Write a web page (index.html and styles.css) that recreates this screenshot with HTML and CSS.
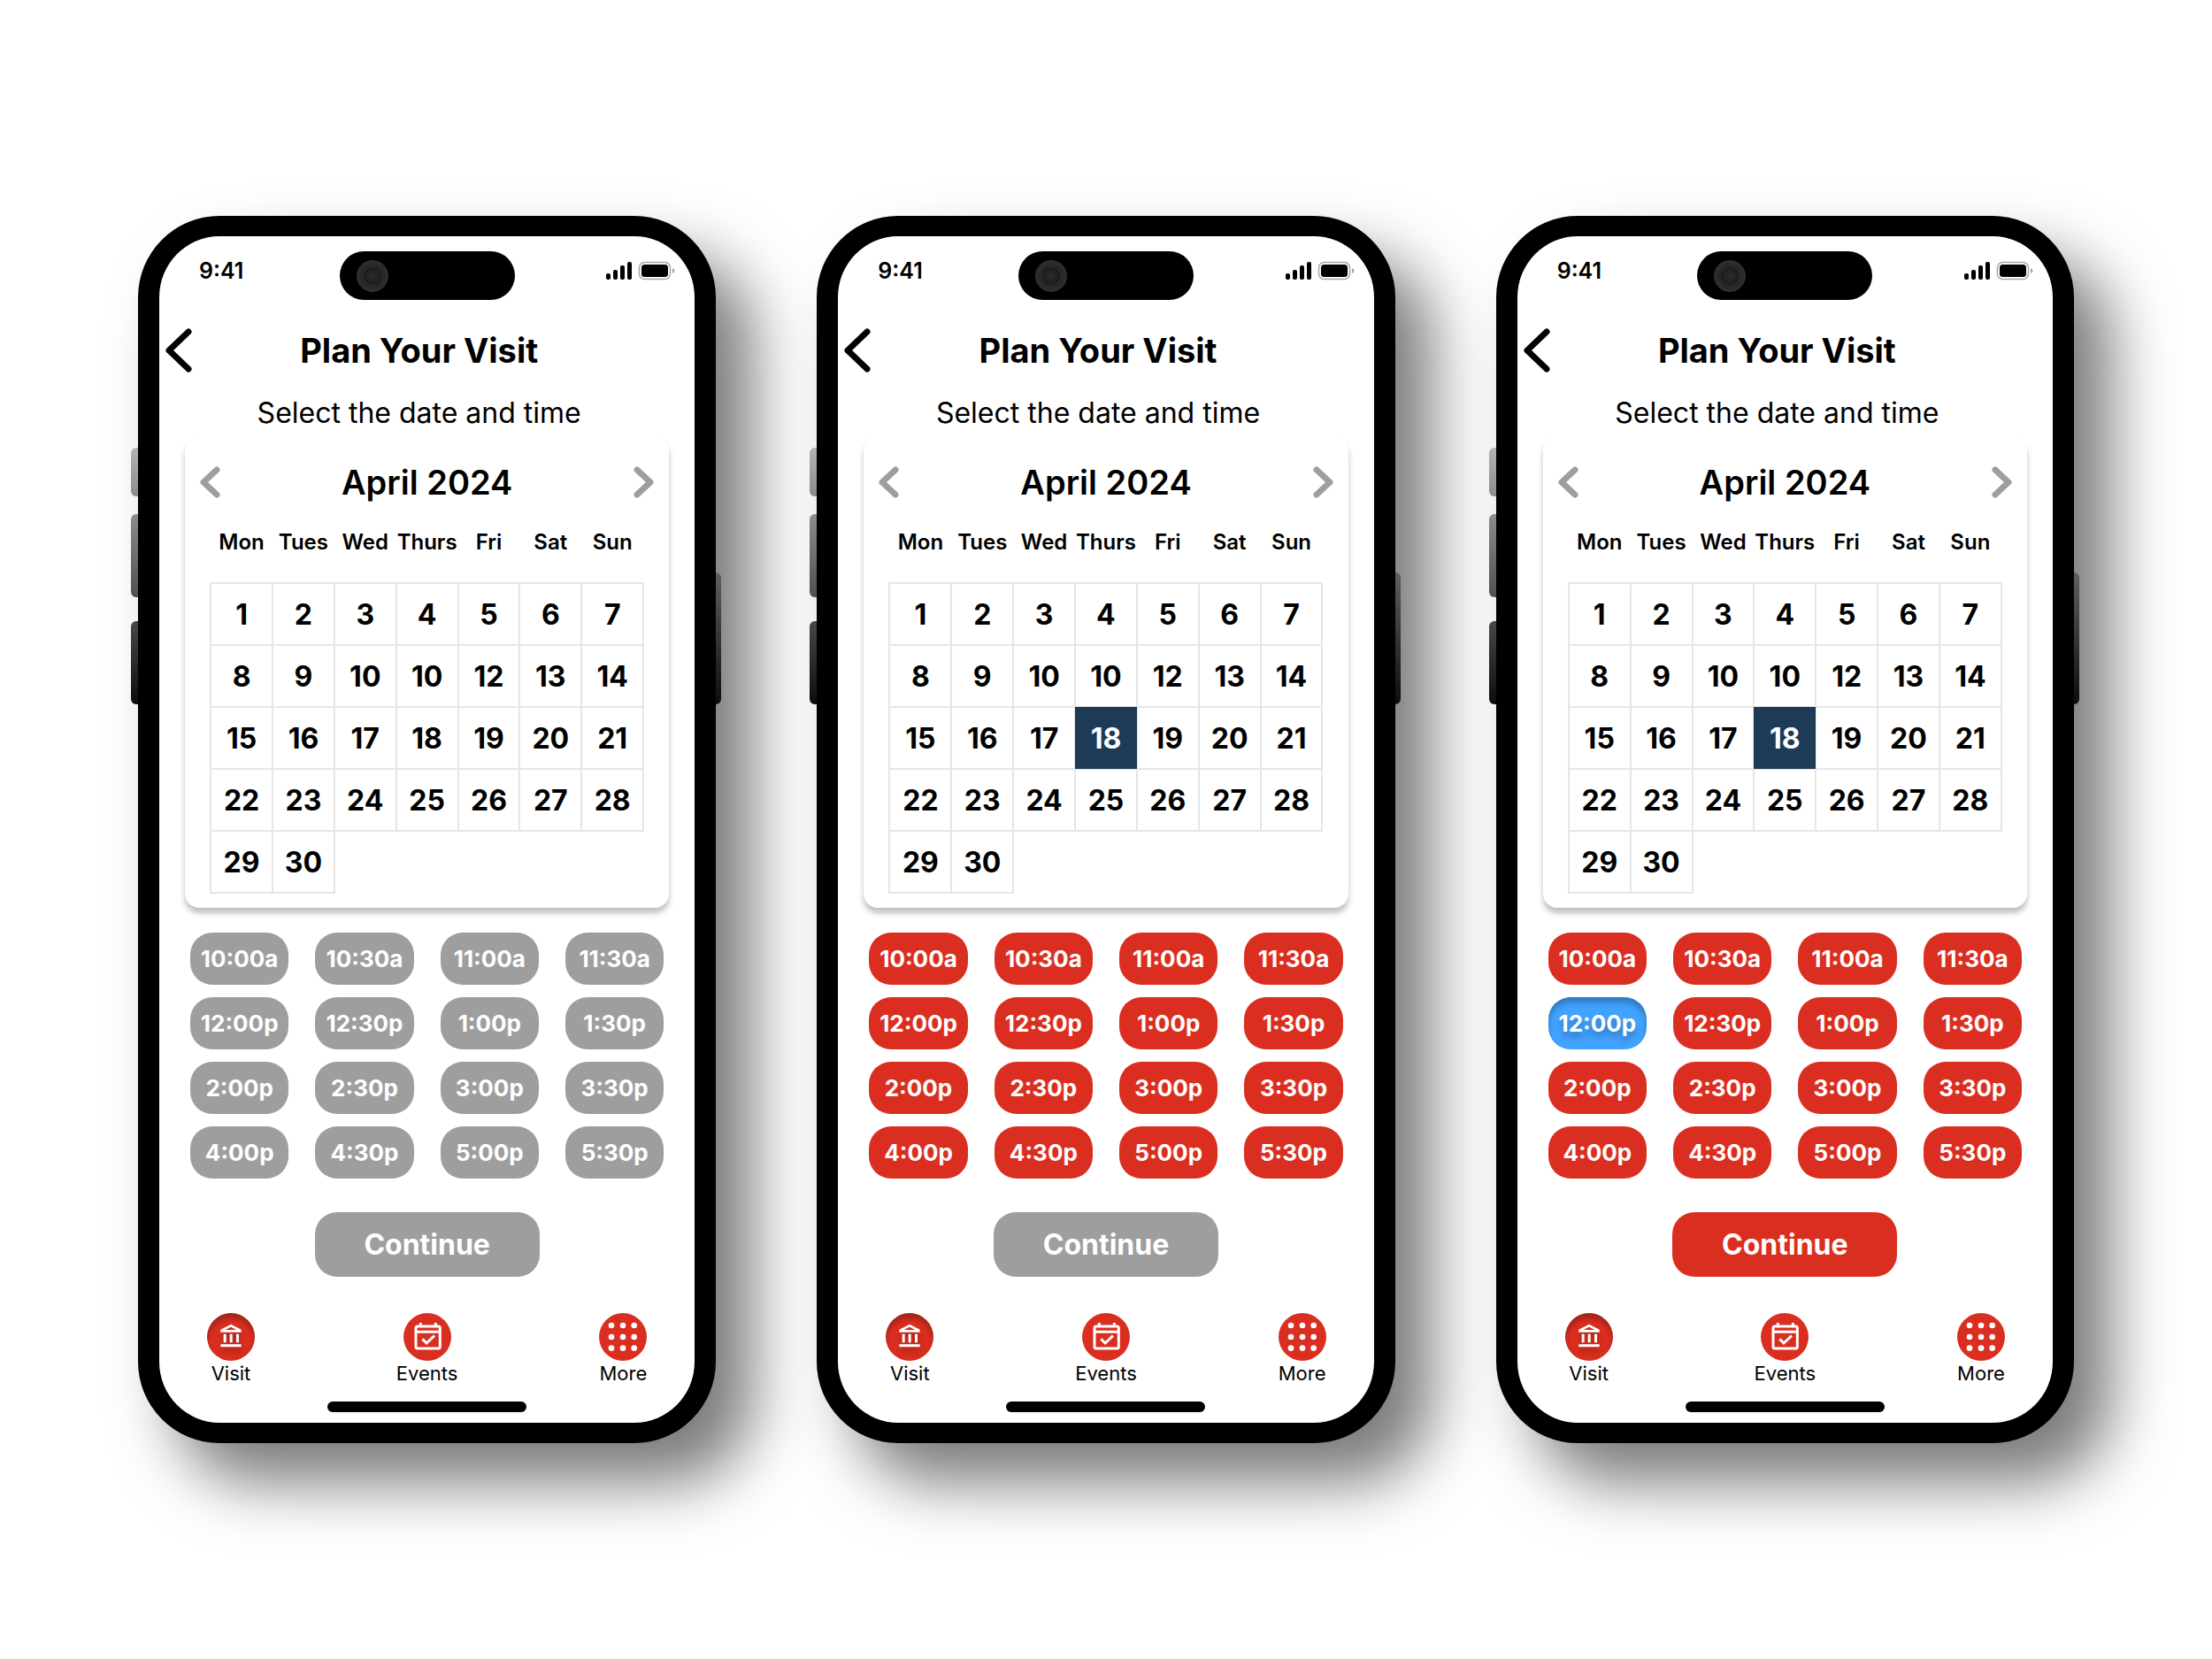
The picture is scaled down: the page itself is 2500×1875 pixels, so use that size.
FILE: index.html
```html
<!DOCTYPE html>
<html lang="en">
<head>
<meta charset="UTF-8">
<meta name="viewport" content="width=device-width, initial-scale=1.0">
<title>Plan Your Visit</title>
<link rel="stylesheet" href="styles.css">
</head>
<body>

<main class="phones" id="phones"></main>

<script src="script.js"></script>
</body>
</html>
```

FILE: styles.css
```css
* {
    box-sizing: border-box;
}
body {
    font-family: Inter, "Liberation Sans", sans-serif;
    margin: 0;
    color: #000;
    background-color: #fff;
}
button {
    font-family: inherit;
    padding: 0;
    border: none;
    background: none;
    color: inherit;
    cursor: pointer;
}
button:disabled {
    cursor: default;
}
svg {
    display: block;
}
.phones {
    min-height: 100vh;
    padding: 80px 156px;
    display: grid;
    grid-template-columns: repeat(auto-fit, minmax(600px, 1fr));
    gap: 114px;
    align-content: center;
}

/* device */
.phone {
    position: relative;
    width: 100%;
    max-width: 654px;
    margin: 0 auto;
    border: solid #000;
    border-width: 23px 24px;
    border-radius: 92px;
    background-color: #fff;
    box-shadow: 42px 45px 70px rgba(0, 0, 0, 0.52);
}
.side {
    position: absolute;
    left: -32px;
    width: 8px;
    border-radius: 6px 0 0 6px;
}
.side-mute {
    top: 239px;
    height: 55px;
    background: linear-gradient(#b4b4b4, #8c8c8c);
}
.side-up {
    top: 314px;
    height: 94px;
    background: linear-gradient(#8c8c8c, #505050);
}
.side-down {
    top: 435px;
    height: 94px;
    background: linear-gradient(#484848, #0c0c0c);
}
.side-power {
    left: auto;
    right: -30px;
    top: 380px;
    width: 6px;
    height: 149px;
    border-radius: 0 6px 6px 0;
    background: linear-gradient(#606060, #0c0c0c);
}

/* status bar */
.status {
    display: grid;
    grid-template-columns: 1fr 198px 1fr;
    padding-top: 17px;
}
.clock {
    padding-left: 45px;
    font-size: 25px;
    font-weight: 600;
    line-height: 44px;
}
.island {
    height: 55px;
    padding: 10px 19px;
    border-radius: 28px;
    background-color: #000;
}
.camera {
    width: 36px;
    height: 36px;
    border: 1px solid #333;
    border-radius: 50%;
    background: radial-gradient(circle, #2b2b2b 0, #222 7px, #1b1b1b 8px, #262626 11px, #303030 18px);
}
.indicators {
    justify-self: end;
    padding: 11px 22px 0 0;
}

/* header */
.header {
    display: flex;
    align-items: center;
    margin-top: 32px;
    padding: 0 58px 0 4px;
}
.header h1 {
    flex: 1;
    margin: 0;
    font-size: 38px;
    font-weight: 700;
    line-height: 50px;
    text-align: center;
}
.hint {
    margin: 28px 18px 0 0;
    font-size: 32px;
    line-height: 36px;
    text-align: center;
}

/* calendar */
.calendar {
    margin: 9px 29px 0;
    padding: 31px 0 16px;
    border-radius: 16px;
    background-color: #fff;
    box-shadow: 0 6px 6px rgba(0, 0, 0, 0.25);
}
.month {
    display: flex;
    justify-content: space-between;
    align-items: center;
    padding: 0 16px;
}
.month h2 {
    margin: 0;
    font-size: 38px;
    font-weight: 600;
    line-height: 40px;
}
.days {
    width: 491px;
    max-width: 100%;
    margin: 2px auto 0;
    border-collapse: collapse;
    table-layout: fixed;
}
.days th {
    height: 92px;
    padding: 0;
    font-size: 24px;
    font-weight: 600;
    white-space: nowrap;
}
.days td {
    padding: 0;
}
.days td.day {
    border: 2px solid #e6e6e2;
}
.day button {
    display: block;
    width: 100%;
    height: 68px;
    font-size: 32px;
    font-weight: 700;
}
.day .selected {
    color: #fff;
    background-color: #1d3a56;
    outline: 1px solid #1d3a56;
}

/* time slots */
.slots {
    display: grid;
    grid-template-columns: repeat(4, 1fr);
    gap: 14px 30px;
    margin-top: 28px;
    padding: 0 35px;
}
.slot {
    height: 59px;
    border-radius: 25px;
    font-size: 26px;
    font-weight: 700;
    color: #fff;
    background-color: #da2f20;
}
.continue {
    display: block;
    width: 254px;
    height: 73px;
    margin: 38px auto 0;
    border-radius: 25px;
    font-size: 32px;
    font-weight: 700;
    color: #fff;
    background-color: #da2f20;
}
.slot:disabled,
.continue:disabled {
    background-color: #9e9e9e;
}
.slot.selected {
    background-color: #42a2ff;
    box-shadow: inset 0 6px 6px rgba(0, 0, 0, 0.25);
    text-shadow: 0 6px 6px rgba(0, 0, 0, 0.25);
}

/* bottom navigation */
.tabs {
    display: flex;
    justify-content: space-between;
    margin-top: 41px;
    padding: 0 46px;
}
.tabs a {
    display: flex;
    flex-direction: column;
    align-items: center;
    width: 70px;
    font-size: 22px;
    line-height: 28px;
    color: #000;
    text-decoration: none;
}
.tab-icon {
    width: 54px;
    height: 54px;
    border-radius: 50%;
    background-color: #da2f20;
}
.current .tab-icon {
    box-shadow: inset 0 6px 6px rgba(0, 0, 0, 0.25);
}
.current svg {
    filter: drop-shadow(0 6px 3px rgba(0, 0, 0, 0.25));
}
.home-bar {
    width: 225px;
    height: 12px;
    margin: 18px auto 12px;
    border-radius: 6px;
    background-color: #000;
}
```

FILE: script.js
```js
const weekdays = ['Mon', 'Tues', 'Wed', 'Thurs', 'Fri', 'Sat', 'Sun'];

const weeks = [
    [1, 2, 3, 4, 5, 6, 7],
    [8, 9, 10, 10, 12, 13, 14],
    [15, 16, 17, 18, 19, 20, 21],
    [22, 23, 24, 25, 26, 27, 28],
    [29, 30]
];

const times = [
    '10:00a', '10:30a', '11:00a', '11:30a',
    '12:00p', '12:30p', '1:00p', '1:30p',
    '2:00p', '2:30p', '3:00p', '3:30p',
    '4:00p', '4:30p', '5:00p', '5:30p'
];

// the three steps of picking a visit
const steps = [
    { day: null, time: null },
    { day: 18, time: null },
    { day: 18, time: '12:00p' }
];

const signalIcon = `
    <svg width="78" height="22" viewBox="0 0 78 22">
        <rect x="0" y="14" width="5" height="7" rx="2"/>
        <rect x="8" y="10" width="5" height="11" rx="2"/>
        <rect x="16" y="5" width="5" height="16" rx="2"/>
        <rect x="24" y="1" width="5" height="20" rx="2"/>
        <rect x="37.5" y="1.5" width="35" height="19" rx="6" fill="none" stroke="#a6a6a6" stroke-width="1.5"/>
        <rect x="40" y="4" width="30" height="14" rx="3.5"/>
        <path d="M75 8q2.500 1 2.500 3t-2.500 3z" fill="#a6a6a6"/>
    </svg>`;

const visitIcon = `
    <svg width="54" height="54" viewBox="0 0 162 162" fill="#fff">
        <path fill-rule="evenodd" d="M81 38l35 18v9H46v-9zM81 47l-19 10h38z"/>
        <path d="M56 71h9v29h-9zM77 71h9v29h-9zM99 71h9v29h-9zM46 106h70v9H46z"/>
    </svg>`;

const eventsIcon = `
    <svg width="54" height="54" viewBox="0 0 162 162" fill="none" stroke="#fff" stroke-width="9">
        <rect x="42" y="45" width="82" height="75" rx="6"/>
        <path d="M42 64h82M58 33v12M109 33v12"/>
        <path d="M64 88l14 14 27-25"/>
    </svg>`;

const moreIcon = `
    <svg width="54" height="54" viewBox="0 0 162 162" fill="#fff">
        ${[42, 81, 119].map(y => [42, 81, 119].map(x => `<circle cx="${x}" cy="${y}" r="10"/>`).join('')).join('')}
    </svg>`;

function dayCell(day, step) {
    const selected = day === step.day ? ' class="selected"' : '';
    return `<td class="day"><button type="button"${selected}>${day}</button></td>`;
}

function slotButton(time, step) {
    const selected = time === step.time ? ' selected' : '';
    const disabled = step.day ? '' : ' disabled';
    return `<button type="button" class="slot${selected}"${disabled}>${time}</button>`;
}

function phone(step) {
    return `
    <section class="phone">
        <span class="side side-mute"></span>
        <span class="side side-up"></span>
        <span class="side side-down"></span>
        <span class="side side-power"></span>

        <div class="status">
            <span class="clock">9:41</span>
            <div class="island"><div class="camera"></div></div>
            <div class="indicators">${signalIcon}</div>
        </div>

        <header class="header">
            <button type="button" aria-label="Back">
                <svg width="36" height="50" viewBox="0 0 36 50" fill="none" stroke="#000" stroke-width="7" stroke-linecap="round" stroke-linejoin="round">
                    <path d="M29 4L7 25l22 21"/>
                </svg>
            </button>
            <h1>Plan Your Visit</h1>
        </header>
        <p class="hint">Select the date and time</p>

        <div class="calendar">
            <div class="month">
                <button type="button" aria-label="Previous month">
                    <svg width="24" height="38" viewBox="0 0 24 38" fill="none" stroke="#9e9e9e" stroke-width="7" stroke-linecap="round" stroke-linejoin="round">
                        <path d="M20 5L5 19l15 14"/>
                    </svg>
                </button>
                <h2>April 2024</h2>
                <button type="button" aria-label="Next month">
                    <svg width="24" height="38" viewBox="0 0 24 38" fill="none" stroke="#9e9e9e" stroke-width="7" stroke-linecap="round" stroke-linejoin="round">
                        <path d="M4 5l15 14L4 33"/>
                    </svg>
                </button>
            </div>
            <table class="days">
                <thead>
                    <tr>${weekdays.map(name => `<th>${name}</th>`).join('')}</tr>
                </thead>
                <tbody>
                    ${weeks.map(week => `<tr>${week.map(day => dayCell(day, step)).join('')}</tr>`).join('')}
                </tbody>
            </table>
        </div>

        <div class="slots">${times.map(time => slotButton(time, step)).join('')}</div>
        <button type="button" class="continue"${step.time ? '' : ' disabled'}>Continue</button>

        <nav class="tabs">
            <a href="#visit" class="current"><span class="tab-icon">${visitIcon}</span>Visit</a>
            <a href="#events"><span class="tab-icon">${eventsIcon}</span>Events</a>
            <a href="#more"><span class="tab-icon">${moreIcon}</span>More</a>
        </nav>
        <div class="home-bar"></div>
    </section>`;
}

document.getElementById('phones').innerHTML = steps.map(phone).join('');
```
